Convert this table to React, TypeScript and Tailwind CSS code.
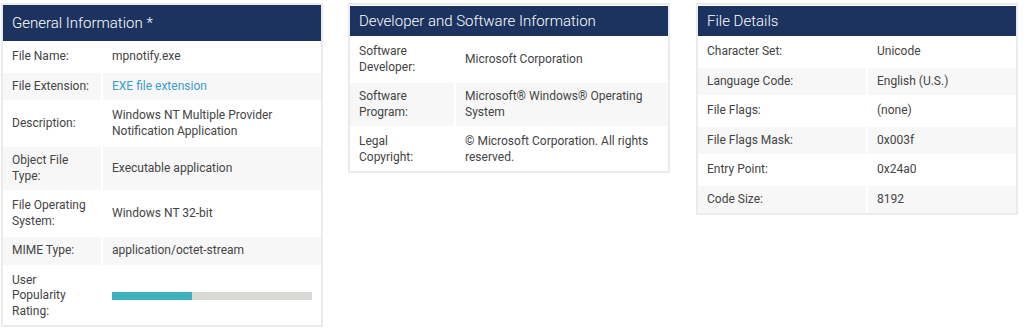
import React from 'react';

type Row = {
  label: string[];
  value: React.ReactNode;
};

const generalRows: Row[] = [
  { label: ['File Name:'], value: 'mpnotify.exe' },
  {
    label: ['File Extension:'],
    value: <span className="text-[#3a9ccf]">EXE file extension</span>,
  },
  {
    label: ['Description:'],
    value: ['Windows NT Multiple Provider', 'Notification Application'],
  },
  { label: ['Object File', 'Type:'], value: 'Executable application' },
  { label: ['File Operating', 'System:'], value: 'Windows NT 32-bit' },
  { label: ['MIME Type:'], value: 'application/octet-stream' },
  {
    label: ['User', 'Popularity', 'Rating:'],
    value: (
      <div className="flex h-[8px] w-[200px] bg-[#d8d8d4]">
        <div className="h-full w-[80px] bg-[#42b0ba]" />
      </div>
    ),
  },
];

const developerRows: Row[] = [
  { label: ['Software', 'Developer:'], value: 'Microsoft Corporation' },
  {
    label: ['Software', 'Program:'],
    value: ['Microsoft® Windows® Operating', 'System'],
  },
  {
    label: ['Legal', 'Copyright:'],
    value: ['© Microsoft Corporation. All rights', 'reserved.'],
  },
];

const detailRows: Row[] = [
  { label: ['Character Set:'], value: 'Unicode' },
  { label: ['Language Code:'], value: 'English (U.S.)' },
  { label: ['File Flags:'], value: '(none)' },
  { label: ['File Flags Mask:'], value: '0x003f' },
  { label: ['Entry Point:'], value: '0x24a0' },
  { label: ['Code Size:'], value: '8192' },
];

function Lines({ value }: { value: React.ReactNode }) {
  if (Array.isArray(value)) {
    return (
      <>
        {value.map((line, i) => (
          <div key={i} className="whitespace-nowrap">
            {line}
          </div>
        ))}
      </>
    );
  }
  return <div className="whitespace-nowrap">{value}</div>;
}

function Panel({
  title,
  rows,
  labelWidth,
  headerClass,
  className = '',
}: {
  title: string;
  rows: Row[];
  labelWidth: string;
  headerClass: string;
  className?: string;
}) {
  return (
    <div
      className={[
        'w-[322px] self-start border-2 border-[#ebebeb] bg-white',
        className,
      ].join(' ')}
    >
      <div
        className={[
          'bg-[#1c335f] text-white text-[15px] font-light leading-[20px] pl-[9px]',
          headerClass,
        ].join(' ')}
      >
        {title}
      </div>
      <div className="flex flex-col gap-[2px] pt-[2px]">
        {rows.map((row, i) => {
          const shaded = i % 2 === 1 ? 'bg-[#f7f7f7]' : 'bg-white';
          return (
            <div key={row.label.join(' ')} className="flex gap-[2px]">
              <div
                className={[
                  'shrink-0 py-[6px] pl-[9px] pr-1 flex flex-col justify-center',
                  labelWidth,
                  shaded,
                ].join(' ')}
              >
                <Lines value={row.label} />
              </div>
              <div
                className={[
                  'flex-1 py-[6px] pl-[9px] pr-1 flex flex-col justify-center',
                  shaded,
                ].join(' ')}
              >
                <Lines value={row.value} />
              </div>
            </div>
          );
        })}
      </div>
    </div>
  );
}

export default function App() {
  return (
    <div
      className="flex gap-[25px] pl-[1px] pt-[3px] text-[12px] leading-[15.5px] text-[#444]"
      style={{ fontFamily: 'Roboto, "Liberation Sans", sans-serif' }}
    >
      <Panel
        title="General Information *"
        rows={generalRows}
        labelWidth="w-[98px]"
        headerClass="pt-[8px] pb-[8px]"
      />
      <Panel
        title="Developer and Software Information"
        rows={developerRows}
        labelWidth="w-[104px]"
        headerClass="mt-[1px] pt-[5px] pb-[5px]"
      />
      <Panel
        title="File Details"
        rows={detailRows}
        labelWidth="w-[168px]"
        headerClass="mt-[1px] pt-[5px] pb-[5px]"
        className="ml-[1px]"
      />
    </div>
  );
}
